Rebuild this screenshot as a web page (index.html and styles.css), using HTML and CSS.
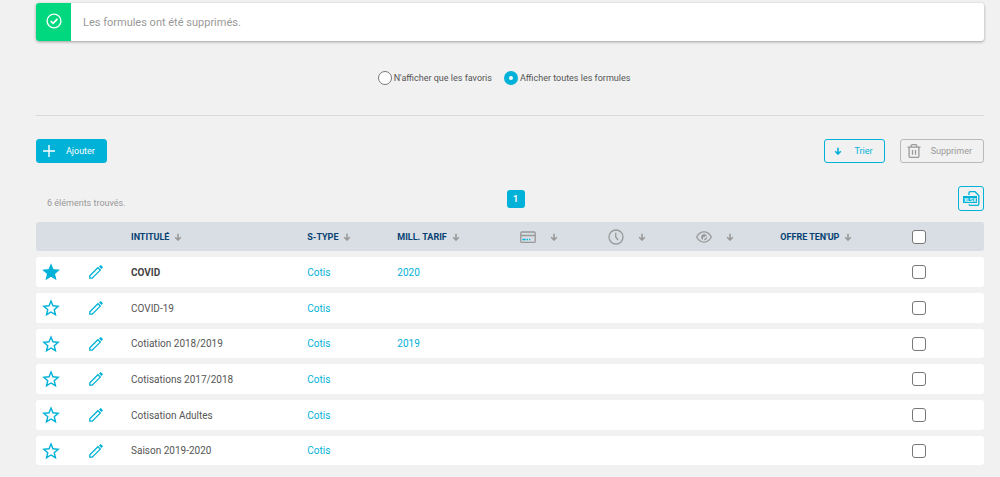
FILE: index.html
```html
<!DOCTYPE html>
<html lang="fr">
<head>
<meta charset="utf-8">
<title>Formules</title>
<link rel="stylesheet" href="styles.css">
</head>
<body>
<svg class="sprite" aria-hidden="true">
  <symbol id="arrow" viewBox="0 0 8 8"><path d="M4 .8V7M1.200 4.200 4 7l2.800-2.800" fill="none" stroke="currentColor" stroke-width="1.600"/></symbol>
  <symbol id="star" viewBox="0 0 24 24"><path d="M12 2.800 14.600 9.100 21.500 9.700 16.300 14.200 17.900 20.900 12 17.300 6.100 20.900 7.700 14.200 2.500 9.700 9.400 9.100Z" stroke="currentColor" stroke-width="1.900"/></symbol>
  <symbol id="pencil" viewBox="0 0 14 14"><path d="M.8 13.200V10.800L8.900 2.700 11.300 5.100 3.200 13.200Z" fill="none" stroke="currentColor" stroke-width="1.300"/><path d="M10 1.600 11.300.3Q11.700 0 12.100.3L13.700 1.900Q14 2.300 13.700 2.700L12.400 4Z" fill="currentColor"/></symbol>
</svg>
<main class="page">
  <div class="notice" role="status">
    <span class="notice-icon"><svg width="16" height="16" viewBox="0 0 16 16" fill="none" stroke="currentColor" stroke-width="1.400"><circle cx="8" cy="8" r="6.900"/><path d="m4.700 8 2.500 2.400 4.200-4.500" stroke-width="1.700"/></svg></span>
    <p class="notice-text">Les formules ont été supprimés.</p>
  </div>

  <form class="filters">
    <label class="choice"><input class="radio" type="radio" name="filtre">N'afficher que les favoris</label>
    <label class="choice"><input class="radio" type="radio" name="filtre" checked>Afficher toutes les formules</label>
  </form>

  <div class="toolbar">
    <button class="btn btn-primary" type="button"><svg width="12" height="12" viewBox="0 0 12 12" stroke="currentColor" stroke-width="1.400"><path d="M6 0v12M0 6h12"/></svg>Ajouter</button>
    <div class="toolbar-end">
      <button class="btn btn-sort" type="button"><svg width="8" height="8"><use href="#arrow"/></svg>Trier</button>
      <button class="btn btn-delete" type="button" disabled><svg width="14" height="14" viewBox="0 0 14 14" fill="none" stroke="currentColor" stroke-width="1.300"><path d="M.5 3.200h13M4.200 3V1.900Q4.200.7 5.400.7h3.200q1.200 0 1.200 1.200V3M2.100 3.200v9q0 1.200 1.200 1.200h7.400q1.200 0 1.200-1.200v-9M5.500 6v4.800M8.500 6v4.800"/></svg>Supprimer</button>
    </div>
  </div>

  <div class="summary">
    <p class="count">6 éléments trouvés.</p>
    <a class="page-number" href="#" aria-current="page">1</a>
    <button class="export" type="button" aria-label="Exporter en XLSX"><svg width="17" height="15" viewBox="0 0 17 15"><path d="M6 4V2Q6 .7 7.300.7H12L15.800 4.500V13Q15.800 14.300 14.500 14.300H7.300Q6 14.300 6 13.200" fill="none" stroke="currentColor" stroke-width="1.300"/><path d="M0 5h14v7H0z" fill="currentColor"/><text class="xlsx" x="7" y="10.500" text-anchor="middle">XLSX</text></svg></button>
  </div>

  <table class="list">
    <colgroup><col class="c-star"><col class="c-edit"><col class="c-name"><col class="c-type"><col class="c-year"><col class="c-card"><col class="c-clock"><col class="c-eye"><col class="c-offer"><col></colgroup>
    <thead>
      <tr>
        <th></th><th></th>
        <th><span class="head">INTITULÉ<svg class="arrow"><use href="#arrow"/></svg></span></th>
        <th><span class="head">S-TYPE<svg class="arrow"><use href="#arrow"/></svg></span></th>
        <th><span class="head">MILL. TARIF<svg class="arrow"><use href="#arrow"/></svg></span></th>
        <th><span class="head head-icon"><svg width="16" height="16" viewBox="0 0 16 16" fill="none" stroke="currentColor" stroke-width="1.300"><rect x=".8" y="3" width="14.400" height="10.400" rx="1"/><path d="M1 6.500h14" stroke-width="1.500"/><path class="accent" d="M2.500 10.500h3.200M6.700 10.500h1.300M9 10.500h1.300"/></svg><svg class="arrow"><use href="#arrow"/></svg></span></th>
        <th><span class="head head-icon"><svg width="16" height="16" viewBox="0 0 16 16" fill="none" stroke="currentColor" stroke-width="1.300"><circle cx="8" cy="8" r="7"/><path d="M7.700 3.800V8l2.300 3"/></svg><svg class="arrow"><use href="#arrow"/></svg></span></th>
        <th><span class="head head-icon"><svg width="16" height="16" viewBox="0 0 16 16" fill="none" stroke="currentColor" stroke-width="1.300"><path d="M.6 8Q3.500 2.900 8 2.900T15.400 8Q12.500 13.100 8 13.100T.6 8Z"/><path d="M8 5a3 3 0 0 0-1 5.800V8.300h1.600v-1h2.300A3 3 0 0 0 8 5Z" fill="currentColor" stroke="none"/><path d="M10.700 8.300A3 3 0 0 1 8.200 10.700"/></svg><svg class="arrow"><use href="#arrow"/></svg></span></th>
        <th><span class="head">OFFRE TEN'UP<svg class="arrow"><use href="#arrow"/></svg></span></th>
        <th><input class="check" type="checkbox" aria-label="Tout sélectionner"></th>
      </tr>
    </thead>
    <tbody>
      <tr><td><button class="icon-btn icon-star favorite" type="button" aria-label="Retirer des favoris"><svg width="18" height="18"><use href="#star"/></svg></button></td><td><button class="icon-btn icon-edit" type="button" aria-label="Modifier COVID"><svg width="14" height="14"><use href="#pencil"/></svg></button></td><td class="strong">COVID</td><td><a href="#">Cotis</a></td><td><a href="#">2020</a></td><td></td><td></td><td></td><td></td><td><input class="check" type="checkbox" aria-label="Sélectionner COVID"></td></tr>
      <tr><td><button class="icon-btn icon-star" type="button" aria-label="Ajouter aux favoris"><svg width="18" height="18"><use href="#star"/></svg></button></td><td><button class="icon-btn icon-edit" type="button" aria-label="Modifier COVID-19"><svg width="14" height="14"><use href="#pencil"/></svg></button></td><td>COVID-19</td><td><a href="#">Cotis</a></td><td></td><td></td><td></td><td></td><td></td><td><input class="check" type="checkbox" aria-label="Sélectionner COVID-19"></td></tr>
      <tr><td><button class="icon-btn icon-star" type="button" aria-label="Ajouter aux favoris"><svg width="18" height="18"><use href="#star"/></svg></button></td><td><button class="icon-btn icon-edit" type="button" aria-label="Modifier Cotiation 2018/2019"><svg width="14" height="14"><use href="#pencil"/></svg></button></td><td>Cotiation 2018/2019</td><td><a href="#">Cotis</a></td><td><a href="#">2019</a></td><td></td><td></td><td></td><td></td><td><input class="check" type="checkbox" aria-label="Sélectionner Cotiation 2018/2019"></td></tr>
      <tr><td><button class="icon-btn icon-star" type="button" aria-label="Ajouter aux favoris"><svg width="18" height="18"><use href="#star"/></svg></button></td><td><button class="icon-btn icon-edit" type="button" aria-label="Modifier Cotisations 2017/2018"><svg width="14" height="14"><use href="#pencil"/></svg></button></td><td>Cotisations 2017/2018</td><td><a href="#">Cotis</a></td><td></td><td></td><td></td><td></td><td></td><td><input class="check" type="checkbox" aria-label="Sélectionner Cotisations 2017/2018"></td></tr>
      <tr><td><button class="icon-btn icon-star" type="button" aria-label="Ajouter aux favoris"><svg width="18" height="18"><use href="#star"/></svg></button></td><td><button class="icon-btn icon-edit" type="button" aria-label="Modifier Cotisation Adultes"><svg width="14" height="14"><use href="#pencil"/></svg></button></td><td>Cotisation Adultes</td><td><a href="#">Cotis</a></td><td></td><td></td><td></td><td></td><td></td><td><input class="check" type="checkbox" aria-label="Sélectionner Cotisation Adultes"></td></tr>
      <tr><td><button class="icon-btn icon-star" type="button" aria-label="Ajouter aux favoris"><svg width="18" height="18"><use href="#star"/></svg></button></td><td><button class="icon-btn icon-edit" type="button" aria-label="Modifier Saison 2019-2020"><svg width="14" height="14"><use href="#pencil"/></svg></button></td><td>Saison 2019-2020</td><td><a href="#">Cotis</a></td><td></td><td></td><td></td><td></td><td></td><td><input class="check" type="checkbox" aria-label="Sélectionner Saison 2019-2020"></td></tr>
    </tbody>
  </table>
</main>
</body>
</html>
```
FILE: styles.css
```css
* { box-sizing: border-box; }

body {
  margin: 0;
  background: #f1f1f1;
  color: #555;
  font-family: Roboto, "Liberation Sans", sans-serif;
  font-size: 10px;
}

p { margin: 0; }
svg { display: block; flex: none; }
a { color: #00b1d8; text-decoration: none; }
button { font: inherit; cursor: pointer; }
.sprite { position: absolute; width: 0; height: 0; }

.page { padding: 3px 16px 0 36px; }

.notice {
  display: flex;
  min-height: 38px;
  overflow: hidden;
  border-radius: 3px;
  background: #fff;
  box-shadow: 0 1px 3px rgba(0, 0, 0, 0.35);
}
.notice-icon {
  display: flex;
  justify-content: center;
  align-items: center;
  width: 35px;
  padding-bottom: 3px;
  background: #00d880;
  color: #fff;
}
.notice-text { align-self: center; padding: 0 12px; color: #999; font-size: 11px; }

.filters {
  display: flex;
  justify-content: center;
  padding: 30px 0;
  border-bottom: 1px solid #d8d8d8;
  font-size: 9px;
  line-height: 14px;
}
.choice { display: flex; align-items: center; gap: 2px; margin-right: 12px; }
.radio {
  appearance: none;
  width: 14px;
  height: 14px;
  margin: 0;
  border: 1px solid #777;
  border-radius: 50%;
  background: #fff;
}
.radio:checked { border: 5px solid #00b1d8; }

.toolbar { display: flex; justify-content: space-between; padding-top: 23px; }
.toolbar-end { display: flex; gap: 15px; }
.btn {
  display: flex;
  align-items: center;
  height: 24px;
  border: 1px solid #00b1d8;
  border-radius: 3px;
  background: none;
  color: #00b1d8;
  font-size: 9px;
}
.btn-primary { gap: 11px; padding: 0 11px 0 6px; background: #00b1d8; color: #fff; }
.btn-sort { gap: 13px; padding: 0 11px 0 9px; }
.btn-delete { gap: 10px; padding: 0 11px 0 6px; border-color: #b9b9b9; color: #999; }

.summary {
  display: grid;
  grid-template-columns: 1fr auto 1fr;
  padding: 23px 0 11px 11px;
  font-size: 9px;
}
.count { align-self: center; padding-top: 8px; color: #999; }
.page-number {
  align-self: center;
  width: 18px;
  border-radius: 3px;
  background: #00b1d8;
  color: #fff;
  font-weight: 700;
  line-height: 18px;
  text-align: center;
}
.export {
  display: flex;
  justify-content: center;
  align-items: center;
  justify-self: end;
  width: 26px;
  height: 25px;
  padding: 0;
  border: 1px solid #00b1d8;
  border-radius: 3px;
  background: none;
  color: #00b1d8;
}
.xlsx { fill: #fff; font-size: 5px; font-weight: 700; }

.list {
  width: 100%;
  border-collapse: separate;
  border-spacing: 0 6px;
  margin-top: -6px;
  table-layout: fixed;
}
.c-star { width: 44px; }
.c-edit { width: 51px; }
.c-name { width: 18.600%; }
.c-type { width: 9.500%; }
.c-year { width: 12.900%; }
.c-card { width: 9.300%; }
.c-clock { width: 9.300%; }
.c-eye { width: 8.900%; }
.c-offer { width: 13.900%; }

th, td { height: 30px; padding: 0; text-align: left; vertical-align: middle; }
th { height: 29px; background: #d8dee3; color: #074273; font-size: 9px; }
td { background: #fff; }
tbody tr:nth-child(3n) td { height: 29px; }
th:first-child, td:first-child { border-radius: 3px 0 0 3px; }
th:last-child, td:last-child { border-radius: 0 3px 3px 0; }
.strong { font-weight: 700; color: #444; }

.head { display: flex; align-items: center; gap: 5px; }
.head-icon { gap: 14px; color: #999; }
.arrow { width: 8px; height: 8px; color: #999; }
.accent { stroke: #00b1d8; }

.icon-btn {
  display: block;
  padding: 0;
  border: 0;
  background: none;
  color: #00b1d8;
  fill: none;
}
.icon-star { margin-left: 6px; }
.icon-edit { margin-left: 9px; }
.favorite { fill: currentColor; }

.check {
  display: block;
  appearance: none;
  width: 14px;
  height: 14px;
  margin: 0;
  border: 1px solid #777;
  border-radius: 3px;
  background: #fff;
}
```
